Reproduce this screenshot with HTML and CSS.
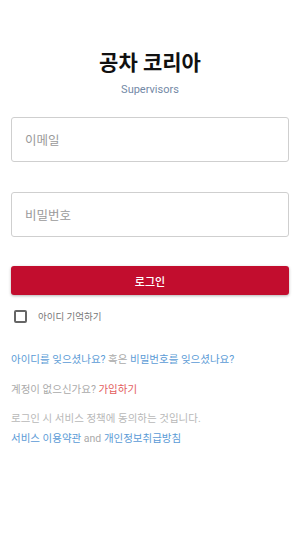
FILE: index.html
```html
<!DOCTYPE html>
<html lang="ko">
<head>
    <meta charset="UTF-8">
    <meta name="viewport" content="width=device-width, initial-scale=1.0">
    <title>공차 코리아</title>
    <link rel="stylesheet" href="styles.css">
</head>
<body>
    <div class="login">
        <h1>공차 코리아</h1>
        <div class="subtitle">Supervisors</div>

        <div class="field">이메일</div>
        <div class="field">비밀번호</div>

        <button class="btn-login">로그인</button>

        <label class="remember">
            <span class="checkbox"></span>
            <span>아이디 기억하기</span>
        </label>

        <p class="line line-forgot">
            <a href="#">아이디를 잊으셨나요?</a> 혹은 <a href="#">비밀번호를 잊으셨나요?</a>
        </p>
        <p class="line line-signup">
            계정이 없으신가요? <a href="#" class="red">가입하기</a>
        </p>
        <p class="line line-terms">로그인 시 서비스 정책에 동의하는 것입니다.</p>
        <p class="line line-policy">
            <a href="#">서비스 이용약관</a> and <a href="#">개인정보취급방침</a>
        </p>
    </div>
</body>
</html>
```

FILE: styles.css
```css
body {
    margin: 0;
    background: #ffffff;
    font-family: Roboto, "Noto Sans CJK KR", sans-serif;
    color: #222;
}

.login {
    padding: 46px 11px 0;
}

h1 {
    margin: 0;
    text-align: center;
    font-size: 21px;
    font-weight: 700;
    line-height: 34px;
    color: #111;
}

.subtitle {
    text-align: center;
    font-size: 11px;
    line-height: 16px;
    margin-top: 2px;
    color: #7389a6;
}

.field {
    box-sizing: border-box;
    height: 45px;
    border: 1px solid #cfcfcf;
    border-radius: 3px;
    padding: 0 13px;
    display: flex;
    align-items: center;
    font-size: 12.5px;
    color: #9a9a9a;
    margin-top: 19px;
}

.field + .field {
    margin-top: 30px;
}

.btn-login {
    display: block;
    width: 100%;
    height: 29px;
    margin-top: 29px;
    border: none;
    border-radius: 3px;
    background: #c20d2e;
    color: #ffffff;
    font-family: Roboto, "Noto Sans CJK KR", sans-serif;
    font-size: 11px;
    font-weight: 500;
    box-shadow: 0 1px 3px rgba(0, 0, 0, 0.3);
}

.remember {
    display: flex;
    align-items: center;
    margin-top: 14px;
    padding-left: 3px;
    font-size: 9.5px;
    color: #777;
}

.checkbox {
    box-sizing: border-box;
    width: 13px;
    height: 13px;
    border: 2px solid #666;
    border-radius: 2px;
    margin-right: 11px;
}

.line {
    margin: 0;
    font-size: 10.5px;
    line-height: 15px;
    color: #aaaaaa;
}

.line a {
    color: #5b9bd6;
    text-decoration: none;
}

.line a.red {
    color: #e35d5d;
}

.line-forgot {
    margin-top: 29px;
}

.line-signup {
    margin-top: 15px;
}

.line-terms {
    margin-top: 14px;
    color: #b8b8b8;
}

.line-policy {
    margin-top: 5px;
}
```
